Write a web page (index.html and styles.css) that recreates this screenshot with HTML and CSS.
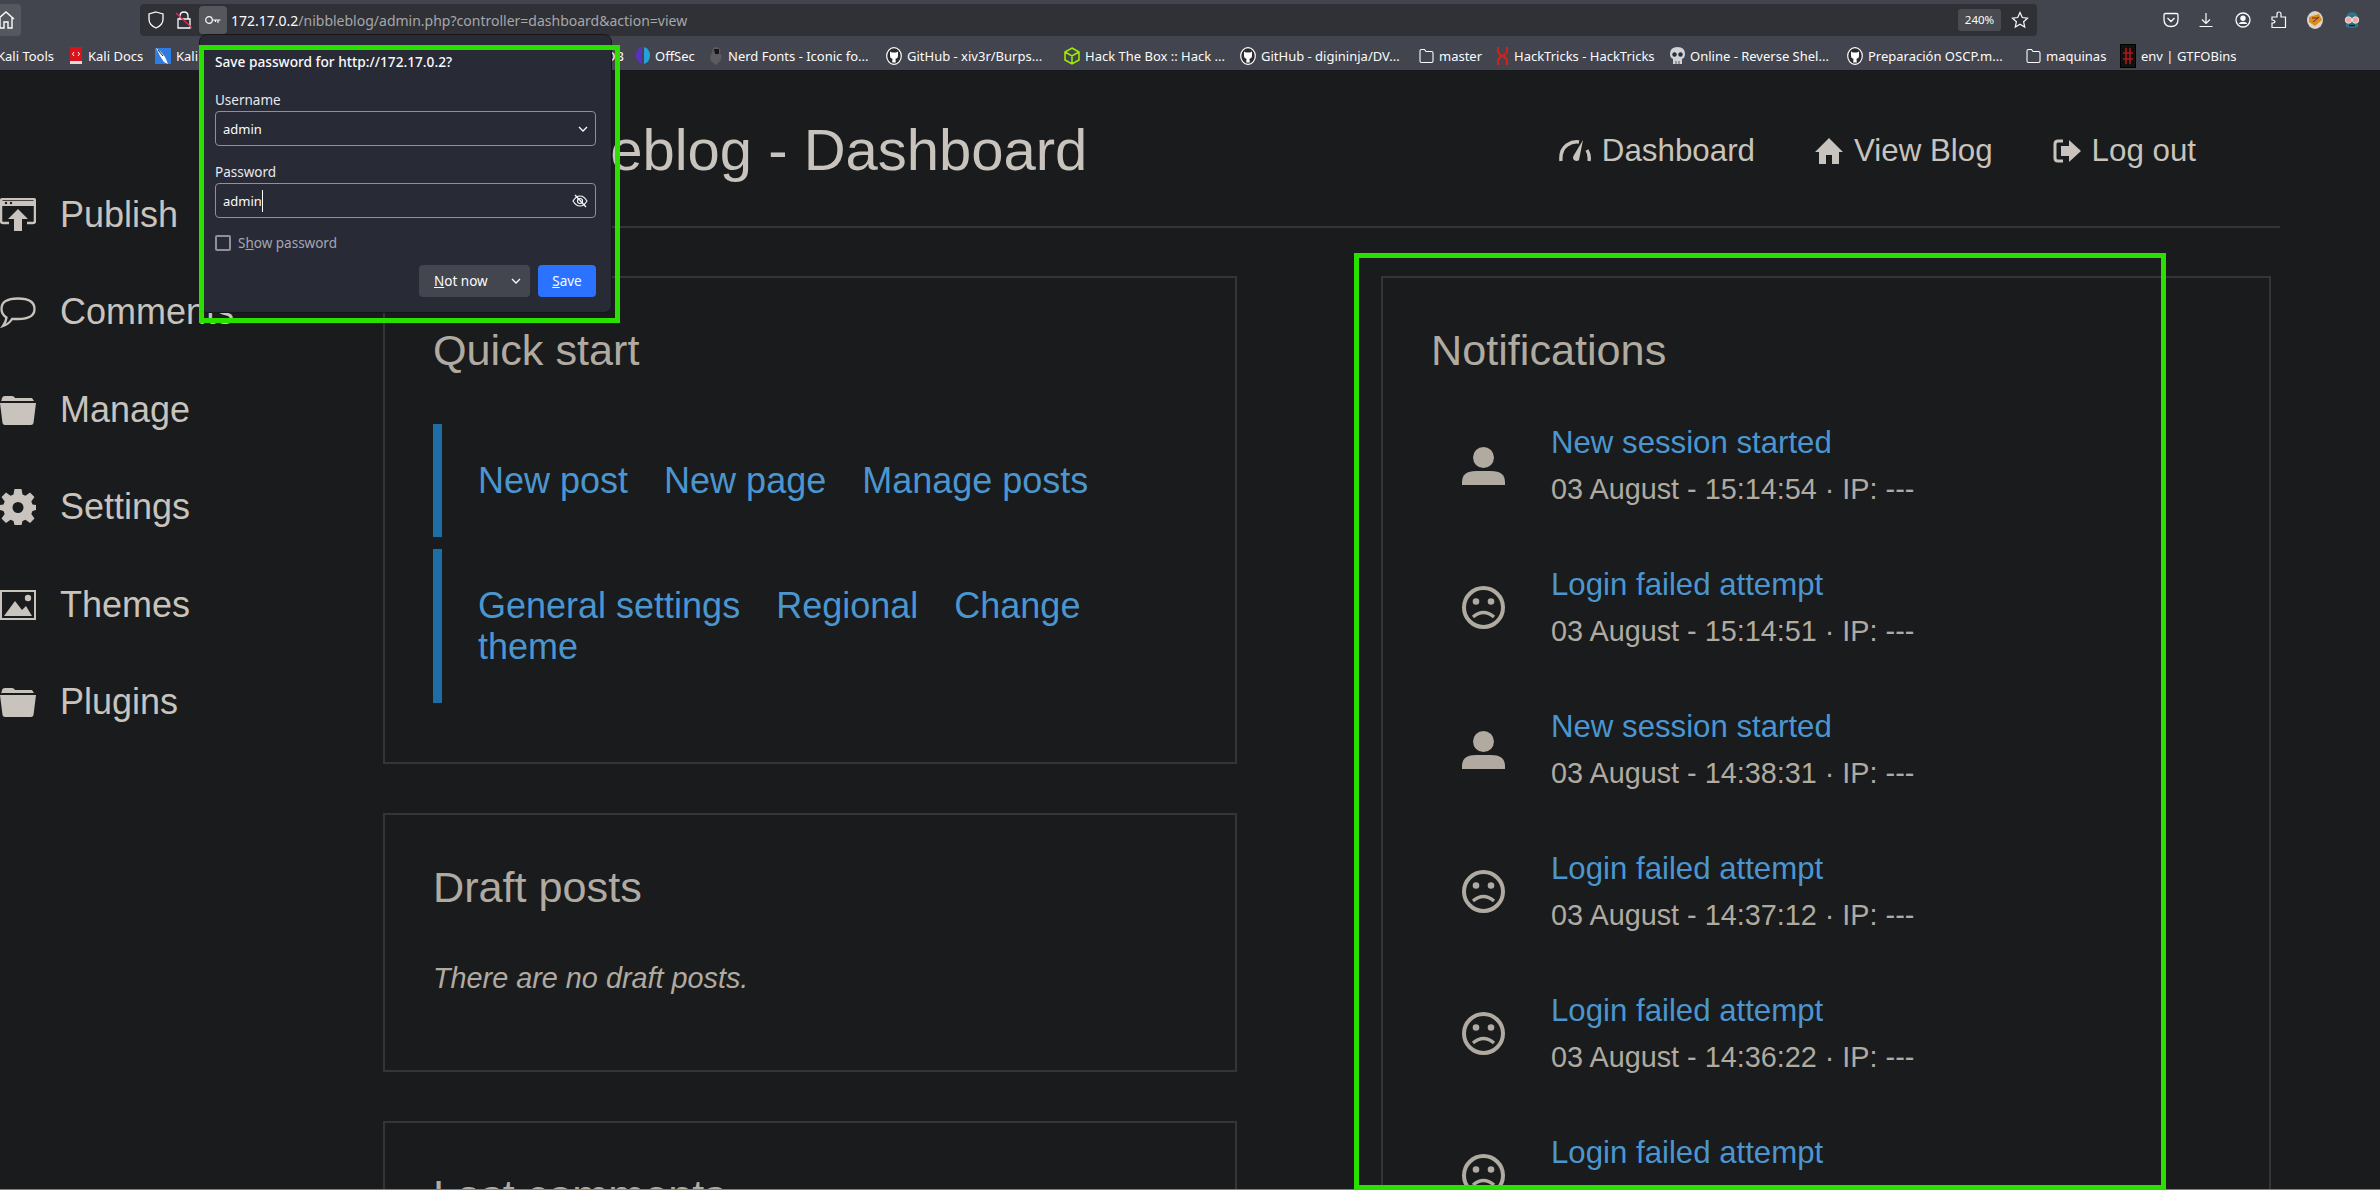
FILE: index.html
```html
<!DOCTYPE html>
<html lang="en">
<head>
  <meta charset="UTF-8">
  <title>Nibbleblog - Dashboard</title>
  <link rel="stylesheet" href="styles.css">
</head>
<body>
  <svg class="defs" width="0" height="0">
    <symbol id="gh" viewBox="0 0 16 18">
      <ellipse cx="8" cy="9" rx="7.300" ry="8.300" fill="#2a2c31" stroke="#fff" stroke-width="1.200"/>
      <path d="M4 4.500 L6 5.500 H10 L12 4.500 V9 Q12 11.500 9.500 11.800 L9.800 15.500 H6.200 L6.500 11.800 Q4 11.500 4 9 Z" fill="#fff"/>
    </symbol>
    <symbol id="bm-folder" viewBox="0 0 15 16">
      <path d="M1 3 Q1 1.500 2.500 1.500 H5.500 L7 3.500 H12.500 Q14 3.500 14 5 V13 Q14 14.500 12.500 14.500 H2.500 Q1 14.500 1 13 Z" fill="none" stroke="#fbfbfe" stroke-width="1.100"/>
    </symbol>
    <symbol id="folder" viewBox="0 0 36 30">
      <path d="M1 7 L2 3 Q2.500 1 5 1 H12 Q14 1 15 3 H32 L34 6 H1 Z M0 8 H36 L33.500 28 Q33 30 31 30 H5 Q3 30 2.500 28 Z" fill="#c8c3bc"/>
    </symbol>
    <symbol id="person" viewBox="0 0 43 38">
      <ellipse cx="21.500" cy="10.500" rx="10.500" ry="10.500" fill="#b0aaa0"/>
      <path d="M0 38 V35 Q0 24 14 24 H29 Q43 24 43 35 V38 Z" fill="#b0aaa0"/>
    </symbol>
    <symbol id="frown" viewBox="0 0 43 43">
      <circle cx="21.500" cy="21.500" r="19.500" fill="none" stroke="#b0aaa0" stroke-width="4"/>
      <circle cx="14" cy="15.500" r="3.300" fill="#b0aaa0"/>
      <circle cx="29" cy="15.500" r="3.300" fill="#b0aaa0"/>
      <path d="M11 31 Q21.500 22 32 31" fill="none" stroke="#b0aaa0" stroke-width="3.400"/>
    </symbol>
    <symbol id="chev" viewBox="0 0 10 6">
      <path d="M1 1 L5 5 L9 1" fill="none" stroke="#fbfbfe" stroke-width="1.300"/>
    </symbol>
  </svg>

  <header class="browser">
    <div class="nav-row">
      <div class="home-btn">
        <svg width="20" height="20" viewBox="0 0 20 20"><path d="M-2 9 L6 2 L14 9 M0 8 V18 H4 V12 H8 V18 H12 V8" fill="none" stroke="#fbfbfe" stroke-width="1.400"/></svg>
      </div>
      <div class="url-bar">
        <svg class="url-icon" width="16" height="18" viewBox="0 0 16 18"><path d="M8 1 L15 3 V8 Q15 14 8 17 Q1 14 1 8 V3 Z" fill="none" stroke="#fbfbfe" stroke-width="1.300"/></svg>
        <svg class="url-icon lock" width="16" height="18" viewBox="0 0 16 18"><path d="M4 8 V5 Q4 1 8 1 Q12 1 12 5 V8 M2 8 H14 V17 H2 Z" fill="none" stroke="#fbfbfe" stroke-width="1.300"/><path d="M0 2 L16 17" stroke="#e22850" stroke-width="1.300"/></svg>
        <div class="key-btn">
          <svg width="16" height="10" viewBox="0 0 16 10"><circle cx="4" cy="5" r="3.300" fill="none" stroke="#fbfbfe" stroke-width="1.200"/><path d="M7.500 5 H15.500 M13 5 V8 M10.500 5 V7" fill="none" stroke="#fbfbfe" stroke-width="1.200"/></svg>
        </div>
        <div class="url-text"><span class="host">172.17.0.2</span>/nibbleblog/admin.php?controller=dashboard&amp;action=view</div>
        <div class="zoom-level">240%</div>
        <svg class="star" width="18" height="18" viewBox="0 0 18 18"><path d="M9 1.500 L11.300 6.500 L16.500 7.100 L12.600 10.700 L13.700 16 L9 13.300 L4.300 16 L5.400 10.700 L1.500 7.100 L6.700 6.500 Z" fill="none" stroke="#fbfbfe" stroke-width="1.200"/></svg>
      </div>
      <div class="tools">
        <svg width="16" height="16" viewBox="0 0 16 16"><path d="M2.500 1.500 H13.500 Q15 1.500 15 3 V7.500 Q15 14.500 8 14.500 Q1 14.500 1 7.500 V3 Q1 1.500 2.500 1.500 Z M4.500 6 L8 9.500 L11.500 6" fill="none" stroke="#fbfbfe" stroke-width="1.300"/></svg>
        <svg width="16" height="16" viewBox="0 0 16 16"><path d="M8 1 V11 M4 7.500 L8 11.500 L12 7.500 M1.500 14.500 H14.500" fill="none" stroke="#fbfbfe" stroke-width="1.200"/></svg>
        <svg width="16" height="16" viewBox="0 0 16 16"><circle cx="8" cy="8" r="7" fill="none" stroke="#fbfbfe" stroke-width="1.300"/><circle cx="8" cy="6.300" r="2.700" fill="#fbfbfe"/><path d="M3.800 12 Q4.500 9.800 8 9.800 Q11.500 9.800 12.200 12 Z" fill="#fbfbfe"/></svg>
        <svg width="16" height="18" viewBox="0 0 16 18"><path d="M1 6 H6 V3 Q6 1 8 1 Q10 1 10 3 V6 H14.500 V16.500 H1 V12 Q4 12 4 10.500 Q4 9.500 1 9 Z" fill="none" stroke="#fbfbfe" stroke-width="1.200"/></svg>
        <svg width="16" height="18" viewBox="0 0 16 18"><ellipse cx="8" cy="9" rx="8" ry="9" fill="#d9d4c8"/><path d="M2 6 L12 3 L15 9 L8 15 L2 11 Z" fill="#e08a1c"/><path d="M5 7 H11 M6 11 L12 6" stroke="#533" stroke-width="1"/></svg>
        <svg width="18" height="18" viewBox="0 0 18 18"><path d="M3 8 Q3 1 9 1 Q15 1 15 8 V16 Q9 18 3 16 Z" fill="#2f7488"/><circle cx="5.500" cy="9" r="3.200" fill="#f0a89e" stroke="#e8e8e8" stroke-width="1"/><circle cx="12.500" cy="9" r="3.200" fill="#f0a89e" stroke="#e8e8e8" stroke-width="1"/><path d="M6 14.500 H12" stroke="#123" stroke-width="1.500"/></svg>
      </div>
    </div>
    <div class="bookmarks">
      <div class="bm">Kali Tools</div>
      <div class="bm"><svg width="14" height="17" viewBox="0 0 14 17"><rect x="1" y="0" width="12" height="14" fill="#d8131b"/><rect x="1" y="14" width="12" height="3" fill="#ddd"/><path d="M5 5 L3.500 7 L5 9 M9 5 L10.500 7 L9 9" stroke="#fff" fill="none"/></svg>Kali Docs</div>
      <div class="bm"><svg width="16" height="16" viewBox="0 0 16 16"><rect width="16" height="16" rx="1" fill="#2f7de1"/><path d="M1 0 L6 4 L10 9 L13 16 L9 14 L5 8 Z" fill="#fff"/><path d="M3 2 L8 8" stroke="#223"/></svg>Kali Forums</div>
      <div class="bm bm-end">Exploit-DB</div>
      <div class="bm"><svg width="14" height="17" viewBox="0 0 14 17"><path d="M0 8.500 Q0 2 6 0 V17 Q0 15 0 8.500 Z" fill="#5b2fc4"/><path d="M8 0 Q14 2 14 8.500 Q14 15 8 17 Z" fill="#26a0d8"/></svg>OffSec</div>
      <div class="bm"><svg width="14" height="18" viewBox="0 0 14 18"><path d="M7 0 Q13 1 11 6 Q14 10 11 14 L7 18 L2 14 Q0 9 3 6 Q3 1 7 0 Z" fill="#5a5c60"/><path d="M5 2 H10 V7 H6 Z" fill="#161616"/></svg>Nerd Fonts - Iconic fo...</div>
      <div class="bm"><svg width="16" height="18"><use href="#gh"/></svg>GitHub - xiv3r/Burps...</div>
      <div class="bm"><svg width="16" height="18" viewBox="0 0 16 18"><path d="M8 1 L15 5 V13 L8 17 L1 13 V5 Z M1 5 L8 9 L15 5 M8 9 V17" fill="none" stroke="#9fef00" stroke-width="1.500"/></svg>Hack The Box :: Hack ...</div>
      <div class="bm"><svg width="16" height="18"><use href="#gh"/></svg>GitHub - digininja/DV...</div>
      <div class="bm"><svg width="15" height="16"><use href="#bm-folder"/></svg>master</div>
      <div class="bm"><svg width="13" height="18" viewBox="0 0 13 18"><path d="M2 0 V4 Q2 7 6.500 9 Q11 11 11 14 V18 M11 0 V4 Q11 7 6.500 9 Q2 11 2 14 V18" fill="none" stroke="#d6201c" stroke-width="2"/></svg>HackTricks - HackTricks</div>
      <div class="bm"><svg width="15" height="18" viewBox="0 0 15 18"><path d="M7.500 0 Q15 0 15 7 Q15 11 12 12 V17 H3 V12 Q0 11 0 7 Q0 0 7.500 0 Z" fill="#cfd3d8"/><circle cx="4.500" cy="7.500" r="2.200" fill="#2c2e33"/><circle cx="10.500" cy="7.500" r="2.200" fill="#2c2e33"/><path d="M6 14 V17 M9 14 V17" stroke="#555"/></svg>Online - Reverse Shel...</div>
      <div class="bm"><svg width="16" height="18"><use href="#gh"/></svg>Preparación OSCP.m...</div>
      <div class="bm"><svg width="15" height="16"><use href="#bm-folder"/></svg>maquinas</div>
      <div class="bm"><svg width="16" height="24" viewBox="0 0 16 24"><rect x="0.500" y="0.500" width="15" height="23" fill="#111" stroke="#000"/><path d="M6 4 V20 M10 4 V20 M3 9 H13 M3 15 H13" stroke="#b01818" stroke-width="1.600"/></svg>env | GTFOBins</div>
    </div>
  </header>

  <div class="page">
    <nav class="sidebar">
      <a class="side-item">
        <svg width="36" height="33" viewBox="0 0 36 33"><path d="M9 25 H3 Q1 25 1 23 V3 Q1 1 3 1 H33 Q35 1 35 3 V23 Q35 25 33 25 H27" fill="none" stroke="#c8c3bc" stroke-width="2.500"/><path d="M1 3 H35 V8 H1 Z" fill="#c8c3bc"/><circle cx="6" cy="5" r="1.200" fill="#191b1d"/><circle cx="11" cy="5" r="1.200" fill="#191b1d"/><path d="M18 11 L28 21 H22 V33 H14 V21 H8 Z" fill="#c8c3bc"/></svg>
        Publish
      </a>
      <a class="side-item">
        <svg width="36" height="31" viewBox="0 0 36 31"><path d="M18 1.500 Q34.500 1.500 34.500 12 Q34.500 22 18 22 Q14 22 12 22 Q9 27 3 29 Q6 25 6.500 20.500 Q1.500 17.500 1.500 12 Q1.500 1.500 18 1.500 Z" fill="none" stroke="#c8c3bc" stroke-width="2.300"/></svg>
        Comments
      </a>
      <a class="side-item"><svg width="36" height="30"><use href="#folder"/></svg>Manage</a>
      <a class="side-item">
        <svg width="36" height="36" viewBox="0 0 36 36"><path fill="#c8c3bc" fill-rule="evenodd" d="M14.500 0 H21.500 L22.500 5.500 L25.500 6.800 L30 3.500 L34.500 8 L31.300 12.600 L32.500 15.500 L36 16 V21 L32.500 22 L31.300 25 L34.500 29.500 L30 34 L25.500 30.800 L22.500 32 L21.500 36 H14.500 L13.500 32 L10.500 30.800 L6 34 L1.500 29.500 L4.700 25 L3.500 22 L0 21 V16 L3.500 15.500 L4.700 12.600 L1.500 8 L6 3.500 L10.500 6.800 L13.500 5.500 Z M18 13 A5.500 5.500 0 1 0 18 24 A5.500 5.500 0 1 0 18 13 Z"/></svg>
        Settings
      </a>
      <a class="side-item">
        <svg width="36" height="30" viewBox="0 0 36 30"><rect x="1" y="1" width="34" height="28" fill="none" stroke="#c8c3bc" stroke-width="2"/><circle cx="28" cy="8" r="3.200" fill="#c8c3bc"/><path d="M4 26 L15 11 L22 20 L26 16 L32 26 Z" fill="#c8c3bc"/></svg>
        Themes
      </a>
      <a class="side-item"><svg width="36" height="30"><use href="#folder"/></svg>Plugins</a>
    </nav>

    <main class="main">
      <div class="top">
        <h1 class="site-title">Nibbleblog - Dashboard</h1>
        <div class="top-nav">
          <a class="top-link">
            <svg width="32" height="22" viewBox="0 0 32 22"><path d="M2 21 Q1 10 8 5 Q14 1 20 2" fill="none" stroke="#c8c3bc" stroke-width="3.400"/><path d="M30 21 Q31 15 28 10" fill="none" stroke="#c8c3bc" stroke-width="3.400"/><path d="M24 0 L20 20 Q18 22 15 20 Q13 18 15 15 Z" fill="#c8c3bc"/></svg>
            Dashboard
          </a>
          <a class="top-link">
            <svg width="28" height="26" viewBox="0 0 28 26"><path d="M14 0 L28 14 H24 V26 H17 V17 H11 V26 H4 V14 H0 Z" fill="#c8c3bc"/></svg>
            View Blog
          </a>
          <a class="top-link">
            <svg width="28" height="24" viewBox="0 0 28 24"><path d="M10 2 H5 Q2 2 2 5 V19 Q2 22 5 22 H10" fill="none" stroke="#c8c3bc" stroke-width="3"/><path d="M16 1 L28 12 L16 23 V17 H8 V7 H16 Z" fill="#c8c3bc"/></svg>
            Log out
          </a>
        </div>
      </div>

      <div class="columns">
        <div>
          <section class="box">
            <h2>Quick start</h2>
            <div class="quick">
              <a>New post</a> <a>New page</a> <a>Manage posts</a>
            </div>
            <div class="quick">
              <a>General settings</a> <a>Regional</a> <a>Change theme</a>
            </div>
          </section>
          <section class="box">
            <h2>Draft posts</h2>
            <p class="empty">There are no draft posts.</p>
          </section>
          <section class="box">
            <h2>Last comments</h2>
          </section>
        </div>

        <section class="box box-notif">
          <h2 class="notif-title">Notifications</h2>
          <div class="notif">
            <svg width="43" height="38"><use href="#person"/></svg>
            <div><a>New session started</a><span>03 August - 15:14:54 · IP: ---</span></div>
          </div>
          <div class="notif">
            <svg width="43" height="43"><use href="#frown"/></svg>
            <div><a>Login failed attempt</a><span>03 August - 15:14:51 · IP: ---</span></div>
          </div>
          <div class="notif">
            <svg width="43" height="38"><use href="#person"/></svg>
            <div><a>New session started</a><span>03 August - 14:38:31 · IP: ---</span></div>
          </div>
          <div class="notif">
            <svg width="43" height="43"><use href="#frown"/></svg>
            <div><a>Login failed attempt</a><span>03 August - 14:37:12 · IP: ---</span></div>
          </div>
          <div class="notif">
            <svg width="43" height="43"><use href="#frown"/></svg>
            <div><a>Login failed attempt</a><span>03 August - 14:36:22 · IP: ---</span></div>
          </div>
          <div class="notif">
            <svg width="43" height="43"><use href="#frown"/></svg>
            <div><a>Login failed attempt</a><span>03 August - 14:35:40 · IP: ---</span></div>
          </div>
        </section>
      </div>
    </main>
  </div>

  <!-- save password doorhanger -->
  <div class="popup">
    <div class="popup-title">Save password for http://172.17.0.2?</div>
    <label class="field-label">Username</label>
    <div class="field">
      <span>admin</span>
      <svg width="10" height="6"><use href="#chev"/></svg>
    </div>
    <label class="field-label">Password</label>
    <div class="field">
      <span class="caret">admin</span>
      <svg width="16" height="16" viewBox="0 0 16 16"><path d="M1 8 Q4 3 8 3 Q12 3 15 8 Q12 13 8 13 Q4 13 1 8 Z" fill="none" stroke="#fbfbfe" stroke-width="1.100"/><circle cx="8" cy="8" r="2.500" fill="none" stroke="#fbfbfe" stroke-width="1.100"/><path d="M3 2 L14 14" stroke="#fbfbfe" stroke-width="1.200"/></svg>
    </div>
    <div class="show-row">
      <span class="check"></span>
      <span>S<u>h</u>ow password</span>
    </div>
    <div class="popup-actions">
      <div class="btn btn-split"><span><u>N</u>ot now</span><svg width="10" height="6"><use href="#chev"/></svg></div>
      <div class="btn btn-save"><span><u>S</u>ave</span></div>
    </div>
  </div>

  <!-- annotations on the screenshot -->
  <div class="mark mark-popup"></div>
  <div class="mark mark-notif"></div>
  <div class="bottom-line"></div>
</body>
</html>
```

FILE: styles.css
```css
* { box-sizing: border-box; }
html, body { height: 1190px; overflow: hidden; }
body {
  margin: 0;
  background: #191b1d;
  font-family: "Liberation Sans", Arial, sans-serif;
  color: #c8c3bc;
  position: relative;
}
.defs { position: absolute; }
a { color: #4b96cf; }

/* browser chrome */
.browser {
  height: 71px;
  background: #42454d;
  font-family: "Noto Sans", sans-serif;
  color: #fbfbfe;
  font-size: 13px;
  border-bottom: 1px solid #18191c;
}
.nav-row {
  height: 36px;
  padding-top: 4px;
  display: flex;
  position: relative;
}
.home-btn {
  width: 21px;
  height: 32px;
  background: #55585f;
  border-radius: 0 4px 4px 0;
  display: flex;
  align-items: center;
}
.url-bar {
  width: 1897px;
  height: 32px;
  margin-left: 119px;
  background: #303136;
  border-radius: 4px;
  display: flex;
  align-items: center;
  padding-left: 7px;
}
.url-icon { margin-left: 1px; }
.lock { margin-left: 12px; }
.key-btn {
  width: 28px;
  height: 28px;
  margin-left: 7px;
  background: #55575c;
  border-radius: 4px;
  display: flex;
  align-items: center;
  justify-content: center;
}
.url-text { margin-left: 4px; color: #a6a7ab; flex: 1; font-size: 14px; }
.host { color: #fbfbfe; }
.zoom-level {
  width: 43px;
  height: 22px;
  background: #4a4b50;
  border-radius: 3px;
  font-size: 11.500px;
  line-height: 22px;
  text-align: center;
}
.star { margin: 0 8px 0 10px; }
.tools {
  flex: 1;
  display: grid;
  grid-template-columns: 35px 37px 36px 36px 36px 36px;
  padding-left: 126px;
  align-items: center;
  justify-items: start;
  height: 32px;
}
.bookmarks {
  height: 34px;
  padding-top: 5px;
  display: grid;
  grid-template-columns: 72px 86px 250px 231px 73px 177px 178px 176px 179px 77px 174px 177px 179px 94px 200px;
  margin-left: -3px;
  align-items: center;
  white-space: nowrap;
}
.bm { display: flex; align-items: center; gap: 5px; }
.bm-end { justify-content: flex-end; padding-right: 12px; }

/* page */
.page { display: flex; }
.sidebar {
  width: 383px;
  padding-top: 95px;
  flex: none;
}
.side-item {
  height: 97.500px;
  display: flex;
  align-items: center;
  gap: 24px;
  font-size: 36px;
  color: #c8c3bc;
}
.main { width: 1897px; }
.top {
  height: 157px;
  border-bottom: 2px solid #333638;
  display: flex;
  align-items: center;
  justify-content: space-between;
  padding: 0 84px 0 95px;
}
.site-title {
  margin: 2px 0 0;
  font-size: 58px;
  font-weight: normal;
  color: #c8c3bc;
}
.top-nav { display: flex; gap: 60px; margin-top: 5px; }
.top-link {
  display: flex;
  align-items: center;
  gap: 11px;
  font-size: 31.300px;
  color: #c8c3bc;
}
.columns {
  margin-top: 48px;
  display: grid;
  grid-template-columns: 854px 890px;
  column-gap: 144px;
  align-items: start;
}
.box {
  border: 2px solid #333638;
  padding: 46px 48px 48px;
  margin-bottom: 49px;
}
.box h2 {
  margin: 0 0 48px;
  font-size: 43.200px;
  line-height: 52px;
  font-weight: normal;
  color: #b0aaa0;
}
.quick {
  border-left: 9px solid #1c6ea4;
  padding: 36px 36px;
  margin-bottom: 12px;
  font-size: 36px;
  line-height: 41px;
}
.quick:last-child { margin-bottom: 11px; }
.quick a { margin-right: 26px; }
.empty {
  margin: -3px 0 24px;
  font-style: italic;
  font-size: 28.800px;
  line-height: 40px;
  color: #b0aaa0;
}
.box .notif-title { margin-bottom: 46px; }
.notif {
  display: flex;
  align-items: center;
  gap: 46px;
  padding-left: 31px;
  margin-bottom: 55px;
}
.notif a {
  display: block;
  font-size: 31.200px;
  line-height: 42px;
  margin-bottom: 5px;
}
.notif span {
  display: block;
  font-size: 28.800px;
  line-height: 40px;
  color: #b0aaa0;
}

/* doorhanger */
.popup {
  position: absolute;
  left: 199px;
  top: 34px;
  width: 413px;
  height: 279px;
  background: #282a36;
  border: 1px solid #15161a;
  border-radius: 8px;
  padding: 18px 15px 0;
  font-family: "Noto Sans", sans-serif;
  font-size: 13.500px;
  color: #fbfbfe;
}
.popup-title {
  font-weight: 500;
  font-size: 13.700px;
  height: 38px;
  line-height: 18px;
}
.field-label {
  display: block;
  height: 20px;
  line-height: 18px;
  color: #e8e8ee;
}
.field {
  height: 35px;
  margin-bottom: 17px;
  border: 1px solid #8f8f9d;
  border-radius: 4px;
  display: flex;
  align-items: center;
  justify-content: space-between;
  padding: 0 7px 0 7px;
  font-size: 13px;
}
.caret { border-right: 1px solid #fff; line-height: 22px; }
.show-row {
  display: flex;
  align-items: center;
  gap: 7px;
  color: #a6a6b2;
  height: 16px;
}
.check {
  width: 16px;
  height: 16px;
  border: 2px solid #8f8f9d;
  border-radius: 2px;
}
.popup-actions {
  margin-top: 14px;
  display: flex;
  justify-content: flex-end;
  gap: 8px;
}
.btn {
  height: 32px;
  border-radius: 4px;
  display: flex;
  align-items: center;
}
.btn-split {
  width: 111px;
  background: #43454f;
  padding: 0 9px 0 15px;
  justify-content: space-between;
}
.btn-save {
  width: 58px;
  background: #2a72ff;
  justify-content: center;
}

/* annotations */
.mark {
  position: absolute;
  border: 5px solid #29e000;
}
.mark-popup { left: 199px; top: 45px; width: 421px; height: 278px; }
.mark-notif { left: 1354px; top: 253px; width: 812px; height: 937px; z-index: 1; }
.bottom-line {
  position: absolute;
  left: 0;
  right: 0;
  bottom: 0;
  height: 1px;
  background: #808080;
}
```
